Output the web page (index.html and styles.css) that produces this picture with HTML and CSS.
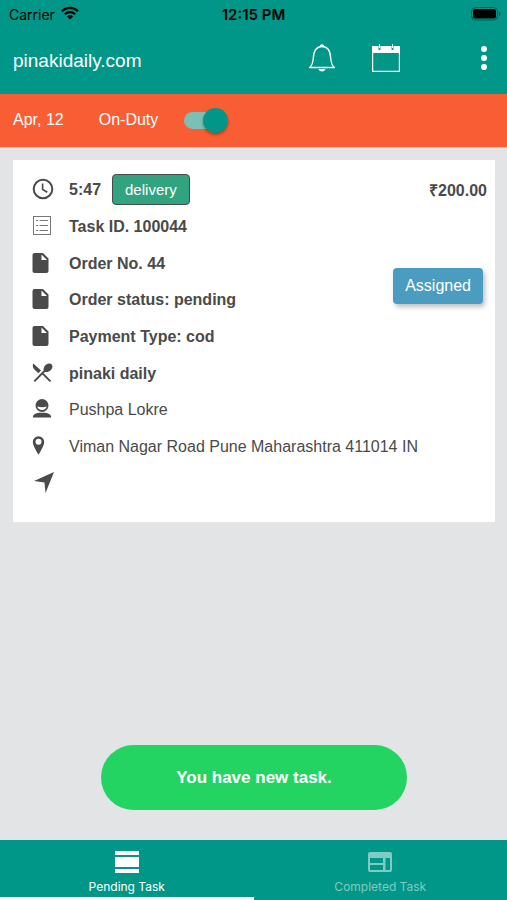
FILE: index.html
```html
<!DOCTYPE html>
<html lang="en">
<head>
    <meta charset="utf-8">
    <meta name="viewport" content="width=device-width, initial-scale=1">
    <title>pinakidaily.com</title>
    <link rel="stylesheet" href="styles.css">
</head>
<body>
    <header class="header">
        <div class="status-bar">
            <div class="carrier">
                <span>Carrier</span>
                <svg width="18" height="16" viewBox="0 0 18 16">
                    <path d="M1 5.200a11.400 11.400 0 0 1 16 0M3.800 8.200a7.400 7.400 0 0 1 10.400 0" fill="none" stroke="#000" stroke-width="2.300"/>
                    <path d="M9 13.600 5.900 10.400a4.400 4.400 0 0 1 6.200 0z"/>
                </svg>
            </div>
            <span class="time">12:15 PM</span>
            <div class="battery">
                <svg width="30" height="14" viewBox="0 0 30 14">
                    <rect x="0.500" y="0.500" width="26" height="12.500" rx="4" fill="none" stroke="#000" stroke-opacity="0.400"/>
                    <rect x="2" y="2" width="23" height="9.500" rx="2"/>
                    <path d="M28 4.500c2 .6 2 4 0 4.600z" fill-opacity="0.400"/>
                </svg>
            </div>
        </div>
        <div class="toolbar">
            <h1>pinakidaily.com</h1>
            <button type="button" class="icon-btn" aria-label="Notifications">
                <svg width="28" height="30" viewBox="0 0 28 30" fill="none" stroke="#fff" stroke-width="1.300">
                    <path d="M1.500 24.500c3-2 3.500-5 3.800-9.500C5.700 7.500 8.500 3.500 14 3.500s8.300 4 8.700 11.500c.3 4.500.8 7.500 3.800 9.500z" stroke-linejoin="round"/>
                    <path d="M11.800 3.500a2.200 2.200 0 0 1 4.400 0zM10.500 26h7c-.5 3.300-6.500 3.300-7 0z" fill="#fff" stroke="none"/>
                </svg>
            </button>
            <button type="button" class="icon-btn calendar-btn" aria-label="Calendar">
                <svg width="30" height="30" viewBox="0 0 30 30">
                    <path d="M1 3h28v7H1z" fill="#fff"/>
                    <path d="M1.600 4h26.800v24.400H1.600z" fill="none" stroke="#fff" stroke-width="1.200"/>
                    <path d="M8.500 3v4M21.500 3v4" stroke="#009788" stroke-width="1.800"/>
                    <path d="M8.500 1v4M21.500 1v4" stroke="#fff" stroke-width="1"/>
                </svg>
            </button>
            <button type="button" class="icon-btn menu-btn" aria-label="Menu">
                <svg width="6" height="26" viewBox="0 0 6 26" fill="#fff">
                    <circle cx="3" cy="4" r="3"/>
                    <circle cx="3" cy="13" r="3"/>
                    <circle cx="3" cy="22" r="3"/>
                </svg>
            </button>
        </div>
    </header>

    <div class="duty-bar">
        <span class="date">Apr, 12</span>
        <label for="duty">On-Duty</label>
        <input type="checkbox" id="duty" class="toggle" checked>
    </div>

    <main class="content">
        <section class="card">
            <ul class="task-list">
                <li>
                    <svg class="icon" width="22" height="22" viewBox="0 0 22 22">
                        <circle cx="11" cy="11" r="9.300" fill="none" stroke="#4a4a4a" stroke-width="2"/>
                        <path d="M10.600 5.500v6l4.700 2.800" fill="none" stroke="#4a4a4a" stroke-width="1.600"/>
                    </svg>
                    <strong>5:47</strong>
                    <span class="tag">delivery</span>
                    <strong class="amount">₹200.00</strong>
                </li>
                <li>
                    <svg class="icon outline" width="22" height="22" viewBox="0 0 22 22">
                        <rect x="1.500" y="1.500" width="17" height="18"/>
                        <path d="M7.500 5.500h8.500M7.500 10.500h8.500M7.500 15.500h8.500M4 5.500h2M4 10.500h2M4 15.500h2"/>
                    </svg>
                    <strong>Task ID. 100044</strong>
                </li>
                <li>
                    <svg class="icon" width="22" height="22" viewBox="0 0 22 22">
                        <path fill-rule="evenodd" d="M2.500 1h8.500l5.500 5.500v12.500a2 2 0 0 1-2 2H2.500a2 2 0 0 1-2-2V3a2 2 0 0 1 2-2zM9.500 2.500v5.500h5.500z"/>
                    </svg>
                    <strong>Order No. 44</strong>
                </li>
                <li>
                    <svg class="icon" width="22" height="22" viewBox="0 0 22 22">
                        <path fill-rule="evenodd" d="M2.500 1h8.500l5.500 5.500v12.500a2 2 0 0 1-2 2H2.500a2 2 0 0 1-2-2V3a2 2 0 0 1 2-2zM9.500 2.500v5.500h5.500z"/>
                    </svg>
                    <strong>Order status: pending</strong>
                </li>
                <li>
                    <svg class="icon" width="22" height="22" viewBox="0 0 22 22">
                        <path fill-rule="evenodd" d="M2.500 1h8.500l5.500 5.500v12.500a2 2 0 0 1-2 2H2.500a2 2 0 0 1-2-2V3a2 2 0 0 1 2-2zM9.500 2.500v5.500h5.500z"/>
                    </svg>
                    <strong>Payment Type: cod</strong>
                </li>
                <li>
                    <svg class="icon" width="22" height="22" viewBox="0 0 22 22">
                        <path d="M1.300 1.500 9 8.600 6.300 11.300 2 7C.6 5.500.4 3.300 1.300 1.500z"/>
                        <ellipse cx="16" cy="5.800" rx="5" ry="3.600" transform="rotate(-42 16 5.800)"/>
                        <path d="M13 8.500 2.300 19.300M10.500 11.300l8 8" fill="none" stroke="#4a4a4a" stroke-width="1.900"/>
                    </svg>
                    <strong>pinaki daily</strong>
                </li>
                <li>
                    <svg class="icon" width="22" height="22" viewBox="0 0 22 22">
                        <circle cx="10" cy="7.500" r="6.500"/>
                        <path d="M5.300 8.600c3.300 1 6.100 1 9.400 0a4.800 4.200 0 0 1-9.400 0z" fill="#fff"/>
                        <path d="M.8 19.500c0-3 2.700-4.300 6.200-4.800h6c3.500.5 6.200 1.800 6.200 4.800z"/>
                    </svg>
                    <span>Pushpa Lokre</span>
                </li>
                <li>
                    <svg class="icon" width="22" height="22" viewBox="0 0 22 22">
                        <path fill-rule="evenodd" d="M6.500 1.300a5.700 5.700 0 0 0-5.700 5.700c0 4.300 5.700 12.500 5.700 12.500S12.200 11.300 12.200 7a5.700 5.700 0 0 0-5.700-5.700zM6.500 3.800a3 3 0 1 1 0 6 3 3 0 0 1 0-6z"/>
                    </svg>
                    <span>Viman Nagar Road Pune Maharashtra 411014 IN</span>
                </li>
                <li>
                    <svg class="icon" width="22" height="22" viewBox="0 0 22 22">
                        <path d="M22 0 2 9l10.500 1.500 1 10.500z"/>
                    </svg>
                </li>
            </ul>
            <button type="button" class="assigned-btn">Assigned</button>
        </section>

        <button type="button" class="new-task">You have new task.</button>
    </main>

    <nav class="tabs">
        <a href="#pending" class="tab active">
            <svg width="24" height="24" viewBox="0 0 24 24" fill="currentColor">
                <path d="M0 1h24v4H0zM0 7h24v10H0zM0 19h24v4H0z"/>
            </svg>
            <span>Pending Task</span>
        </a>
        <a href="#completed" class="tab">
            <svg width="24" height="24" viewBox="0 0 24 24" fill="currentColor">
                <path fill-rule="evenodd" d="M2 2h20q2 0 2 2v16q0 2-2 2H2q-2 0-2-2V4q0-2 2-2zM2 8v5h13V8zM2 15v5h13v-5zM17.500 8v12H22V8z"/>
            </svg>
            <span>Completed Task</span>
        </a>
    </nav>
</body>
</html>
```
FILE: styles.css
```css
* {
    box-sizing: border-box;
}

body {
    font-family: "Liberation Sans", Arial, sans-serif;
    font-size: 16px;
    background-color: #e2e4e6;
    color: #4a4a4a;
    margin: 0;
    min-height: 100vh;
    display: flex;
    flex-direction: column;
}

svg {
    display: block;
}

button {
    font-family: inherit;
    font-size: 16px;
    color: #fff;
    border: none;
    cursor: pointer;
}

.header {
    background-color: #009788;
    color: #fff;
}

.status-bar {
    display: grid;
    grid-template-columns: 1fr auto 1fr;
    align-items: center;
    height: 28px;
    padding: 0 6px;
    font-family: Inter, sans-serif;
    font-size: 14px;
    color: #000;
}

.carrier {
    display: flex;
    align-items: center;
    gap: 6px;
    padding-left: 3px;
}

.time {
    font-size: 15px;
    font-weight: 600;
}

.battery {
    justify-self: end;
}

.toolbar {
    display: flex;
    align-items: center;
    height: 66px;
    padding: 0 20px 6px 13px;
}

h1 {
    flex: 1;
    margin: 0;
    padding-top: 6px;
    font-size: 19px;
    font-weight: normal;
}

.icon-btn {
    background: none;
    padding: 0;
}

.calendar-btn {
    margin: 0 80px 0 35px;
}

.duty-bar {
    display: flex;
    align-items: center;
    height: 54px;
    padding: 0 13px;
    background-color: #f95d33;
    border-bottom: 1px solid #e9b9a8;
    color: #fff;
}

.date {
    margin-right: 35px;
}

.date,
.duty-bar label {
    padding-bottom: 2px;
}

.toggle {
    appearance: none;
    position: relative;
    width: 38px;
    height: 17px;
    margin: 0 0 0 26px;
    border-radius: 9px;
    background-color: #7bc0b4;
    cursor: pointer;
}

.toggle::before {
    content: "";
    position: absolute;
    top: -4px;
    left: 0;
    width: 25px;
    height: 25px;
    border-radius: 50%;
    background-color: #009788;
    box-shadow: 0 2px 3px rgba(0, 0, 0, 0.3);
}

.toggle:checked::before {
    left: 19px;
}

.content {
    flex: 1;
    display: flex;
    flex-direction: column;
    justify-content: space-between;
    padding: 12px 12px 30px 13px;
}

.card {
    position: relative;
    background-color: #fff;
    padding: 11px 8px 21px 19px;
}

.task-list {
    display: grid;
    grid-auto-rows: 1fr;
    min-height: 330px;
    margin: 0;
    padding: 0;
    list-style: none;
}

.task-list li {
    display: flex;
    align-items: center;
}

.task-list strong,
.task-list span {
    padding-top: 2px;
}

.icon {
    flex: none;
    margin-right: 15px;
    fill: #4a4a4a;
}

.outline {
    fill: none;
    stroke: #777;
}

.task-list .tag {
    margin-left: 11px;
    padding: 5px 12px 4px;
    border: 1px solid #4a4a4a;
    border-radius: 4px;
    background-color: #31a37e;
    color: #fff;
    font-size: 15px;
    line-height: 20px;
}

.amount {
    margin-left: auto;
}

.assigned-btn {
    position: absolute;
    top: 108px;
    right: 12px;
    padding: 8px 12px;
    border-radius: 4px;
    background-color: #4a9dc0;
    line-height: 20px;
    box-shadow: 2px 3px 5px rgba(0, 0, 0, 0.25);
}

.new-task {
    align-self: center;
    padding: 22px 75px;
    border-radius: 33px;
    background-color: #24d462;
    font-size: 17px;
    font-weight: bold;
    line-height: 21px;
}

.tabs {
    display: flex;
    background-color: #009788;
}

.tab {
    flex: 1;
    display: flex;
    flex-direction: column;
    align-items: center;
    gap: 5px;
    padding: 10px 0 3px;
    border-bottom: 3px solid transparent;
    color: #80cbc3;
    font-family: Inter, sans-serif;
    font-size: 12px;
    line-height: 15px;
    text-decoration: none;
}

.tab.active {
    color: #fff;
    border-bottom-color: #fff;
}
```
